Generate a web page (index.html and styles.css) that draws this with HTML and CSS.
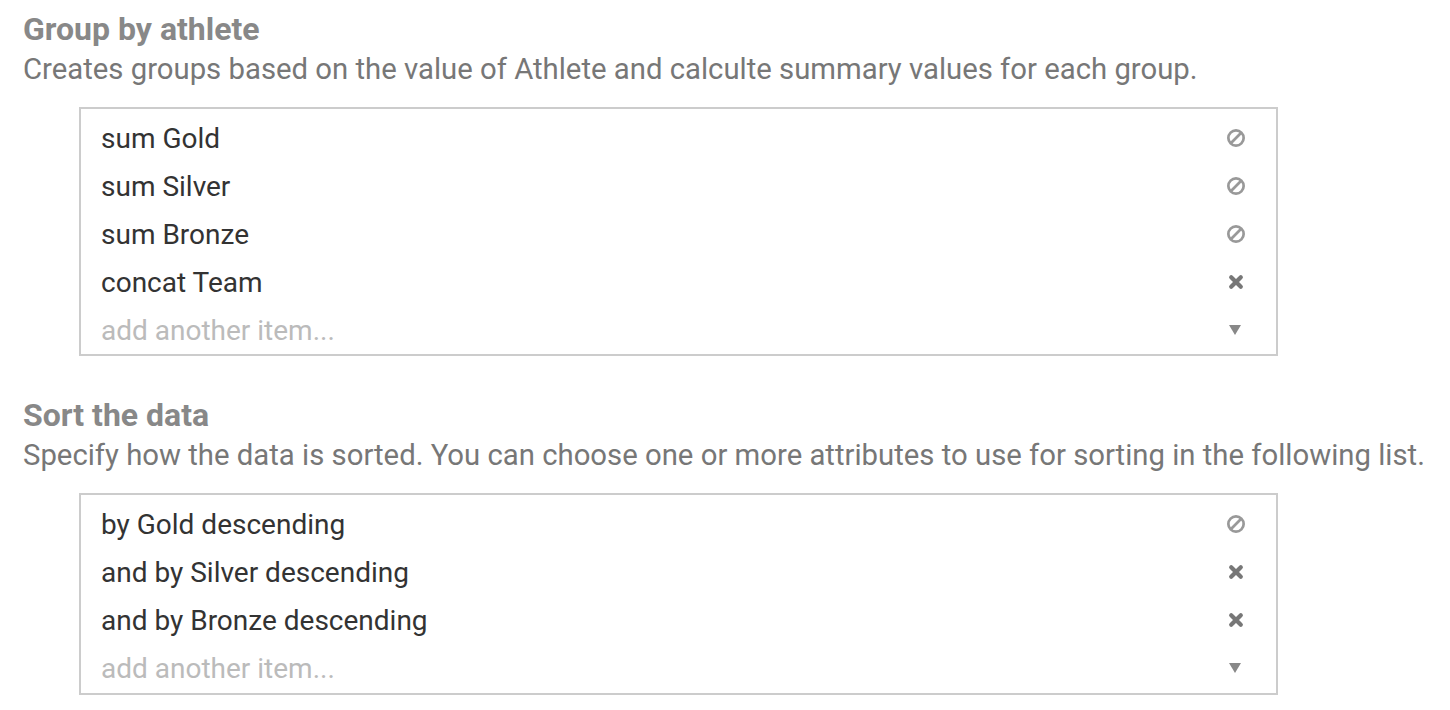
FILE: index.html
```html
<!DOCTYPE html>
<html>
<head>
<meta charset="utf-8">
<link rel="stylesheet" href="styles.css">
</head>
<body>
<svg width="0" height="0" class="defs">
  <defs>
    <symbol id="i-ban" viewBox="0 0 16 16"><circle cx="8" cy="8" r="6.8" fill="none" stroke="currentColor" stroke-width="2.4"/><line x1="3.4" y1="12.6" x2="12.6" y2="3.4" stroke="currentColor" stroke-width="2.4"/></symbol>
    <symbol id="i-x" viewBox="0 0 16 16"><path d="M3.2 3.2 L12.8 12.8 M12.8 3.2 L3.2 12.8" stroke="currentColor" stroke-width="4.2" stroke-linecap="round"/></symbol>
    <symbol id="i-caret" viewBox="0 0 12 10"><path d="M0 0 H12 L6 10 Z" fill="currentColor"/></symbol>
  </defs>
</svg>

<section class="section">
  <h2 class="title">Group by athlete</h2>
  <p class="desc">Creates groups based on the value of Athlete and calculte summary values for each group.</p>
  <div class="list">
    <div class="row"><span class="label">sum Gold</span><span class="icon-box"><svg class="icon ban"><use href="#i-ban"/></svg></span></div>
    <div class="row"><span class="label">sum Silver</span><span class="icon-box"><svg class="icon ban"><use href="#i-ban"/></svg></span></div>
    <div class="row"><span class="label">sum Bronze</span><span class="icon-box"><svg class="icon ban"><use href="#i-ban"/></svg></span></div>
    <div class="row"><span class="label">concat Team</span><span class="icon-box"><svg class="icon x"><use href="#i-x"/></svg></span></div>
    <div class="row"><span class="label placeholder">add another item...</span><span class="icon-box"><svg class="icon caret"><use href="#i-caret"/></svg></span></div>
  </div>
</section>

<section class="section">
  <h2 class="title">Sort the data</h2>
  <p class="desc">Specify how the data is sorted. You can choose one or more attributes to use for sorting in the following list.</p>
  <div class="list">
    <div class="row"><span class="label">by Gold descending</span><span class="icon-box"><svg class="icon ban"><use href="#i-ban"/></svg></span></div>
    <div class="row"><span class="label">and by Silver descending</span><span class="icon-box"><svg class="icon x"><use href="#i-x"/></svg></span></div>
    <div class="row"><span class="label">and by Bronze descending</span><span class="icon-box"><svg class="icon x"><use href="#i-x"/></svg></span></div>
    <div class="row"><span class="label placeholder">add another item...</span><span class="icon-box"><svg class="icon caret"><use href="#i-caret"/></svg></span></div>
  </div>
</section>
</body>
</html>
```
FILE: styles.css
```css
html, body {
  margin: 0;
  padding: 0;
  background: #fff;
}
body {
  font-family: Roboto, "Liberation Sans", sans-serif;
  padding: 9px 0 0 23px;
}
.defs {
  position: absolute;
  width: 0;
  height: 0;
}
.section + .section {
  margin-top: 39px;
}
.title {
  margin: 0;
  font-size: 32px;
  font-weight: 700;
  color: #888;
  line-height: 40px;
}
.desc {
  margin: 0;
  font-size: 29.3px;
  color: #777;
  line-height: 41px;
}
.list {
  margin: 17px 0 0 56px;
  width: 1195px;
  border: 2px solid #ccc;
  padding-top: 5px;
}
.section + .section .list {
  padding-bottom: 1px;
}
.row {
  height: 48px;
  display: flex;
  align-items: center;
  justify-content: space-between;
  padding: 0 31px 0 20px;
}
.label {
  font-size: 28px;
  color: #333;
}
.placeholder {
  color: #bbb;
}
.icon-box {
  flex: 0 0 18px;
  width: 18px;
  height: 18px;
  display: flex;
  align-items: center;
  justify-content: center;
}
.icon {
  flex: 0 0 auto;
  width: 18px;
  height: 18px;
}
.ban { color: #999; }
.x { color: #777; width: 16px; height: 16px; }
.caret { color: #888; width: 12px; height: 10px; margin-left: -2px; }
```
